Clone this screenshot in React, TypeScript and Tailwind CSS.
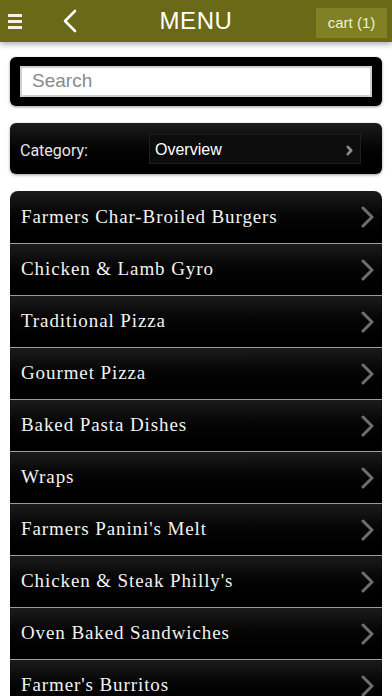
const categories = [
  "Farmers Char-Broiled Burgers",
  "Chicken & Lamb Gyro",
  "Traditional Pizza",
  "Gourmet Pizza",
  "Baked Pasta Dishes",
  "Wraps",
  "Farmers Panini's Melt",
  "Chicken & Steak Philly's",
  "Oven Baked Sandwiches",
  "Farmer's Burritos",
];

function Chevron({ className, w, h, stroke }: { className?: string; w: number; h: number; stroke: number }) {
  return (
    <svg className={className} width={w} height={h} viewBox={`0 0 ${w} ${h}`}>
      <path
        d={`M${stroke / 2 + 0.5} ${stroke / 2 + 0.5} L${w - stroke / 2 - 0.5} ${h / 2} L${stroke / 2 + 0.5} ${h - stroke / 2 - 0.5}`}
        fill="none"
        stroke="currentColor"
        strokeWidth={stroke}
        strokeLinecap="round"
        strokeLinejoin="round"
      />
    </svg>
  );
}

export default function App() {
  return (
    <div className="h-[696px] w-[392px] overflow-hidden bg-white font-['Liberation_Sans',Arial,sans-serif]">
      <header className="relative z-10 flex h-[42px] items-center bg-[#6a6918] shadow-[0_2px_6px_rgba(0,0,0,0.35)]">
        <div className="ml-[8px] flex w-[14px] flex-col gap-[3px]">
          <span className="h-[3px] bg-[#f4f2dc]" />
          <span className="h-[3px] bg-[#f4f2dc]" />
          <span className="h-[3px] bg-[#f4f2dc]" />
        </div>
        <svg className="ml-[40px]" width="16" height="24" viewBox="0 0 16 24">
          <path d="M13 2 L3 12 L13 22" fill="none" stroke="#ffffff" strokeWidth="2.6" strokeLinecap="round" strokeLinejoin="round" />
        </svg>
        <h1 className="absolute left-1/2 -translate-x-1/2 text-[24px] tracking-wide text-white">MENU</h1>
        <button className="ml-auto mr-[5px] mt-[4px] h-[30px] w-[71px] bg-[#808024] text-[15px] text-[#f2f0d4]">
          cart (1)
        </button>
      </header>

      <div className="px-[10px] pt-[15px]">
        <div className="rounded-[6px] bg-black px-[10px] py-[9px] shadow-[0_1px_3px_rgba(0,0,0,0.4)]">
          <div className="flex h-[31px] items-center border-2 border-[#cfcfcf] bg-white px-[10px] text-[19px] text-[#8a8a8a]">
            Search
          </div>
        </div>

        <div className="mt-[17px] flex h-[51px] items-center rounded-[6px] bg-gradient-to-b from-[#1c1c1c] to-black pl-[10px] pr-[21px] shadow-[0_1px_3px_rgba(0,0,0,0.4)]">
          <span className="w-[129px] pt-[4px] font-['Roboto',sans-serif] text-[16px] text-[#e6e6e6]">Category:</span>
          <div className="flex h-[30px] flex-1 items-start justify-between border border-[#1e1e1e] bg-[#0c0c0c] pl-[5px] pr-[7px] pt-[3px]">
            <span className="text-[16px] text-white">Overview</span>
            <Chevron className="mt-[7px] text-[#8a8a8a]" w={7} h={11} stroke={2.6} />
          </div>
        </div>

        <ul className="mt-[17px] overflow-hidden rounded-t-[8px]">
          {categories.map((c, i) => (
            <li
              key={c}
              className={`flex h-[52px] items-center justify-between bg-gradient-to-b from-[#1b1b1b] to-black pl-[11px] pr-[8px] ${
                i > 0 ? "border-t border-[#9a9a9a]" : ""
              }`}
            >
              <span className="font-['Liberation_Serif','DejaVu_Serif',serif] text-[19px] tracking-[0.9px] text-[#f2f2f2]">
                {c}
              </span>
              <Chevron className="text-[#6e6e6e]" w={13} h={22} stroke={3} />
            </li>
          ))}
        </ul>
      </div>
    </div>
  );
}
